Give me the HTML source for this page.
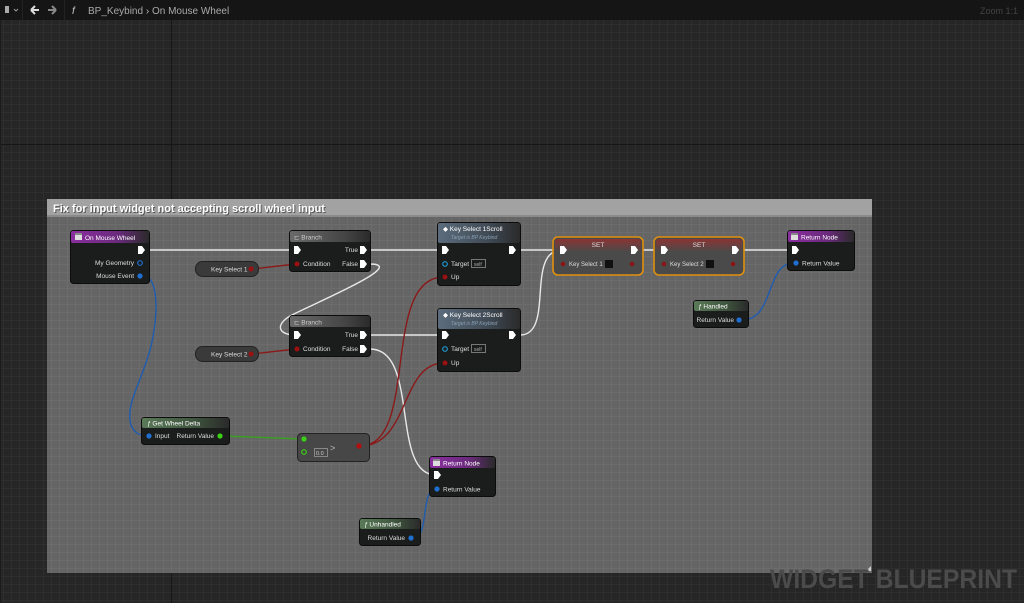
<!DOCTYPE html>
<html><head><meta charset="utf-8"><style>
html,body{margin:0;padding:0;background:#262626;width:1024px;height:603px;overflow:hidden;font-family:"Liberation Sans",sans-serif}
svg{display:block}
text{font-family:"Liberation Sans",sans-serif}
</style></head><body>
<svg width="1024" height="603" viewBox="0 0 1024 603" xmlns="http://www.w3.org/2000/svg">
<defs>
<pattern id="g" width="8" height="8" patternUnits="userSpaceOnUse" x="3" y="0"><rect width="8" height="8" fill="#262626"/><path d="M0 .5H8M.5 0V8" stroke="#2e2e2e" stroke-width="1"/></pattern>
<pattern id="g2" width="8" height="8" patternUnits="userSpaceOnUse" x="3" y="0"><rect width="8" height="8" fill="#656565"/><path d="M0 .5H8M.5 0V8" stroke="#6c6c6c" stroke-width="1"/></pattern>
<linearGradient id="hp" x1="0" x2="1"><stop offset="0" stop-color="#8a2ea0"/><stop offset=".6" stop-color="#6a2a7c"/><stop offset="1" stop-color="#2a2a2a"/></linearGradient>
<linearGradient id="hb" x1="0" x2="1"><stop offset="0" stop-color="#5c6c7c"/><stop offset=".6" stop-color="#404b56"/><stop offset="1" stop-color="#2a2a2a"/></linearGradient>
<linearGradient id="hg" x1="0" x2="1"><stop offset="0" stop-color="#5a7a58"/><stop offset=".6" stop-color="#3e543d"/><stop offset="1" stop-color="#2a2a2a"/></linearGradient>
<linearGradient id="hgray" x1="0" x2="1"><stop offset="0" stop-color="#6a6a6a"/><stop offset=".7" stop-color="#444"/><stop offset="1" stop-color="#2a2a2a"/></linearGradient>
<linearGradient id="hs" x1="0" x2="0" y1="0" y2="1"><stop offset="0" stop-color="#8a3434"/><stop offset="1" stop-color="#4a4a4a"/></linearGradient>
<g id="ex"><path d="M0 -4H4L7 0L4 4H0Z" fill="#fff"/></g>
</defs>
<rect width="1024" height="603" fill="url(#g)"/>
<path d="M171.5 20V603M0 144.5H1024" stroke="#161616"/>
<path d="M0 20V603" stroke="#1c1c1c" stroke-width="2"/>
<rect width="1024" height="20" fill="#151515"/>
<rect x="64" y="0" width="1" height="20" fill="#222"/>
<rect x="22" y="0" width="1" height="20" fill="#222"/>
<rect x="5" y="6" width="4" height="7" fill="#aaa"/>
<path d="M14 9l2 2 2-2" stroke="#999" fill="none"/>
<path d="M31 10h8M31 10l4-4M31 10l4 4" stroke="#ddd" stroke-width="2" fill="none"/>
<path d="M48 10h8M56 10l-4-4M56 10l-4 4" stroke="#888" stroke-width="2" fill="none"/>
<text x="72" y="14" font-size="10" font-style="italic" fill="#ccc">f</text>
<text x="88" y="14" font-size="10" fill="#aaa">BP_Keybind <tspan fill="#bbb">›</tspan> On Mouse Wheel</text>
<text x="1018" y="14" font-size="9" fill="#444" text-anchor="end">Zoom 1:1</text>
<rect x="47" y="199" width="825" height="374" fill="url(#g2)"/>
<rect x="47" y="199" width="825" height="18" fill="#a2a2a2"/>
<rect x="47" y="215" width="825" height="2" fill="#8a8a8a"/>
<text x="54" y="213" font-size="11" font-weight="bold" fill="#222" opacity=".6">Fix for input widget not accepting scroll wheel input</text>
<text x="53" y="212" font-size="11" font-weight="bold" fill="#fff">Fix for input widget not accepting scroll wheel input</text>
<path d="M866 571l5-5v5z" fill="#ccc"/>
<text x="770" y="588" font-size="27" font-weight="bold" fill="#4b4b4b" textLength="247" lengthAdjust="spacingAndGlyphs">WIDGET BLUEPRINT</text>
<g fill="none" stroke-width="1.4">
<path d="M148 250H296M370 250H444M370 335H444M520 250H562M643 250H662M744 250H794" stroke="#e8e8e8"/>
<path d="M370 264C410 264 310 305 290 316C275 325 278 335 296 335" stroke="#e8e8e8"/>
<path d="M370 349C420 349 390 475 436 475" stroke="#e8e8e8"/>
<path d="M520 335C555 335 525 250 562 250" stroke="#e8e8e8"/>
<path d="M252 269L296 264M252 354L296 349" stroke="#8a1a1a"/>
<path d="M360 446C420 446 380 277 444 277M360 446C410 446 400 363 444 363" stroke="#8a1a1a"/>
<path d="M223 436L303 439" stroke="#3aa020"/>
<path d="M143 276C160 276 158 320 150 350C140 385 128 400 130 420C131 432 140 436 148 436" stroke="#1f5cb0"/>
<path d="M742 320C775 320 765 263 794 263" stroke="#1f5cb0"/>
<path d="M413 538C430 538 420 489 436 489" stroke="#1f5cb0"/>
</g>
<g font-size="6.5" fill="#ddd">
<rect x="70.5" y="230.5" width="79" height="53" rx="3" fill="#1b1c1c" stroke="#0c0c0c"/>
<rect x="71" y="231" width="78" height="12" rx="2" fill="url(#hp)"/>
<rect x="75" y="233" width="7" height="7" fill="#ddd"/><rect x="75" y="233" width="7" height="2" fill="#888"/>
<text x="85" y="240" fill="#fff">On Mouse Wheel</text>
<use href="#ex" x="138" y="250"/>
<text x="134" y="265" text-anchor="end">My Geometry</text>
<circle cx="140" cy="263" r="2.3" fill="none" stroke="#1f6fd0" stroke-width="1.2"/>
<text x="134" y="278" text-anchor="end">Mouse Event</text>
<circle cx="140" cy="276" r="2.6" fill="#1f6fd0"/>
<rect x="195.5" y="261.5" width="63" height="15" rx="7" fill="#3a3a3a" stroke="#222"/>
<text x="211" y="271.5">Key Select 1</text><circle cx="251" cy="269" r="2.5" fill="#9b1010"/>
<rect x="195.5" y="346.5" width="63" height="15" rx="7" fill="#3a3a3a" stroke="#222"/>
<text x="211" y="356.5">Key Select 2</text><circle cx="251" cy="354" r="2.5" fill="#9b1010"/>
<rect x="289.5" y="230.5" width="81" height="41" rx="3" fill="#1b1c1c" stroke="#0c0c0c"/>
<rect x="290" y="231" width="80" height="11" rx="2" fill="url(#hgray)"/>
<text x="294" y="239.5" fill="#ccc">⊏ Branch</text>
<use href="#ex" x="294" y="250"/><text x="358" y="252" text-anchor="end">True</text><use href="#ex" x="360" y="250"/>
<circle cx="297" cy="264" r="2.5" fill="#9b1010"/><text x="303" y="266">Condition</text>
<text x="358" y="266" text-anchor="end">False</text><use href="#ex" x="360" y="264"/>
<rect x="289.5" y="315.5" width="81" height="41" rx="3" fill="#1b1c1c" stroke="#0c0c0c"/>
<rect x="290" y="316" width="80" height="11" rx="2" fill="url(#hgray)"/>
<text x="294" y="324.5" fill="#ccc">⊏ Branch</text>
<use href="#ex" x="294" y="335"/><text x="358" y="337" text-anchor="end">True</text><use href="#ex" x="360" y="335"/>
<circle cx="297" cy="349" r="2.5" fill="#9b1010"/><text x="303" y="351">Condition</text>
<text x="358" y="351" text-anchor="end">False</text><use href="#ex" x="360" y="349"/>
<rect x="437.5" y="222.5" width="83" height="63" rx="3" fill="#1b1c1c" stroke="#0c0c0c"/>
<rect x="438" y="223" width="82" height="20" rx="2" fill="url(#hb)"/>
<text x="443" y="231" fill="#fff">◆ Key Select 1Scroll</text>
<text x="451" y="239" font-size="5" font-style="italic" fill="#8aa0b4">Target is BP Keybind</text>
<use href="#ex" x="442" y="250"/><use href="#ex" x="509" y="250"/>
<circle cx="445" cy="264" r="2.3" fill="none" stroke="#1f9ad0" stroke-width="1.2"/><text x="451" y="266">Target</text>
<rect x="471.5" y="259.5" width="14" height="8" fill="none" stroke="#777"/><text x="474" y="266" font-size="5" fill="#aaa">self</text>
<circle cx="445" cy="277" r="2.5" fill="#9b1010"/><text x="451" y="279">Up</text>
<rect x="437.5" y="308.5" width="83" height="63" rx="3" fill="#1b1c1c" stroke="#0c0c0c"/>
<rect x="438" y="309" width="82" height="20" rx="2" fill="url(#hb)"/>
<text x="443" y="317" fill="#fff">◆ Key Select 2Scroll</text>
<text x="451" y="325" font-size="5" font-style="italic" fill="#8aa0b4">Target is BP Keybind</text>
<use href="#ex" x="442" y="335"/><use href="#ex" x="509" y="335"/>
<circle cx="445" cy="349" r="2.3" fill="none" stroke="#1f9ad0" stroke-width="1.2"/><text x="451" y="351">Target</text>
<rect x="471.5" y="344.5" width="14" height="8" fill="none" stroke="#777"/><text x="474" y="351" font-size="5" fill="#aaa">self</text>
<circle cx="445" cy="363" r="2.5" fill="#9b1010"/><text x="451" y="365">Up</text>
<rect x="553" y="237" width="90" height="38" rx="5" fill="#4a4a4a" stroke="#e0900c" stroke-width="1.6"/>
<rect x="555" y="239" width="86" height="13" rx="3" fill="url(#hs)"/>
<text x="598" y="247" text-anchor="middle" fill="#ddd">SET</text>
<use href="#ex" x="560" y="250"/><use href="#ex" x="631" y="250"/>
<circle cx="563" cy="264" r="2.3" fill="#8a1515"/><text x="569" y="266" font-size="6">Key Select 1</text>
<rect x="605" y="260" width="8" height="8" fill="#111"/><circle cx="632" cy="264" r="2.3" fill="#8a1515"/>
<rect x="654" y="237" width="90" height="38" rx="5" fill="#4a4a4a" stroke="#e0900c" stroke-width="1.6"/>
<rect x="656" y="239" width="86" height="13" rx="3" fill="url(#hs)"/>
<text x="699" y="247" text-anchor="middle" fill="#ddd">SET</text>
<use href="#ex" x="661" y="250"/><use href="#ex" x="732" y="250"/>
<circle cx="664" cy="264" r="2.3" fill="#8a1515"/><text x="670" y="266" font-size="6">Key Select 2</text>
<rect x="706" y="260" width="8" height="8" fill="#111"/><circle cx="733" cy="264" r="2.3" fill="#8a1515"/>
<rect x="787.5" y="230.5" width="67" height="40" rx="3" fill="#1b1c1c" stroke="#0c0c0c"/>
<rect x="788" y="231" width="66" height="11" rx="2" fill="url(#hp)"/>
<rect x="791" y="233" width="7" height="7" fill="#ddd"/><rect x="791" y="233" width="7" height="2" fill="#888"/>
<text x="801" y="239.5" fill="#fff">Return Node</text>
<use href="#ex" x="792" y="250"/>
<circle cx="796" cy="263" r="2.6" fill="#1f6fd0"/><text x="802" y="265.5">Return Value</text>
<rect x="693.5" y="300.5" width="55" height="27" rx="3" fill="#1b1c1c" stroke="#0c0c0c"/>
<rect x="694" y="301" width="54" height="10" rx="2" fill="url(#hg)"/>
<text x="698" y="308.5" fill="#fff"><tspan font-style="italic">ƒ</tspan> Handled</text>
<text x="734" y="322" text-anchor="end">Return Value</text><circle cx="739" cy="320" r="2.6" fill="#1f6fd0"/>
<rect x="141.5" y="417.5" width="88" height="27" rx="3" fill="#1b1c1c" stroke="#0c0c0c"/>
<rect x="142" y="418" width="87" height="10" rx="2" fill="url(#hg)"/>
<text x="147" y="425.5" fill="#fff"><tspan font-style="italic">ƒ</tspan> Get Wheel Delta</text>
<circle cx="149" cy="436" r="2.6" fill="#1f6fd0"/><text x="155" y="438">Input</text>
<text x="214" y="438" text-anchor="end">Return Value</text><circle cx="220" cy="436" r="2.6" fill="#3ad014"/>
<rect x="297.5" y="433.5" width="72" height="28" rx="4" fill="#474747" stroke="#222"/>
<circle cx="304" cy="439" r="2.6" fill="#3ad014"/>
<circle cx="304" cy="452" r="2.3" fill="none" stroke="#3ad014" stroke-width="1.2"/>
<rect x="314.5" y="448.5" width="13" height="8" fill="none" stroke="#888"/><text x="316" y="455" font-size="5.5" fill="#ccc">0.0</text>
<text x="330" y="451" font-size="9" fill="#bbb">&gt;</text>
<circle cx="359" cy="446" r="2.7" fill="#b01010"/>
<rect x="429.5" y="456.5" width="66" height="40" rx="3" fill="#1b1c1c" stroke="#0c0c0c"/>
<rect x="430" y="457" width="65" height="11" rx="2" fill="url(#hp)"/>
<rect x="433" y="459" width="7" height="7" fill="#ddd"/><rect x="433" y="459" width="7" height="2" fill="#888"/>
<text x="443" y="465.5" fill="#fff">Return Node</text>
<use href="#ex" x="434" y="475"/>
<circle cx="437" cy="489" r="2.6" fill="#1f6fd0"/><text x="443" y="491.5">Return Value</text>
<rect x="359.5" y="518.5" width="61" height="27" rx="3" fill="#1b1c1c" stroke="#0c0c0c"/>
<rect x="360" y="519" width="60" height="10" rx="2" fill="url(#hg)"/>
<text x="364" y="526.5" fill="#fff"><tspan font-style="italic">ƒ</tspan> Unhandled</text>
<text x="405" y="540" text-anchor="end">Return Value</text><circle cx="411" cy="538" r="2.6" fill="#1f6fd0"/>
</g>
</svg>
</body></html>
